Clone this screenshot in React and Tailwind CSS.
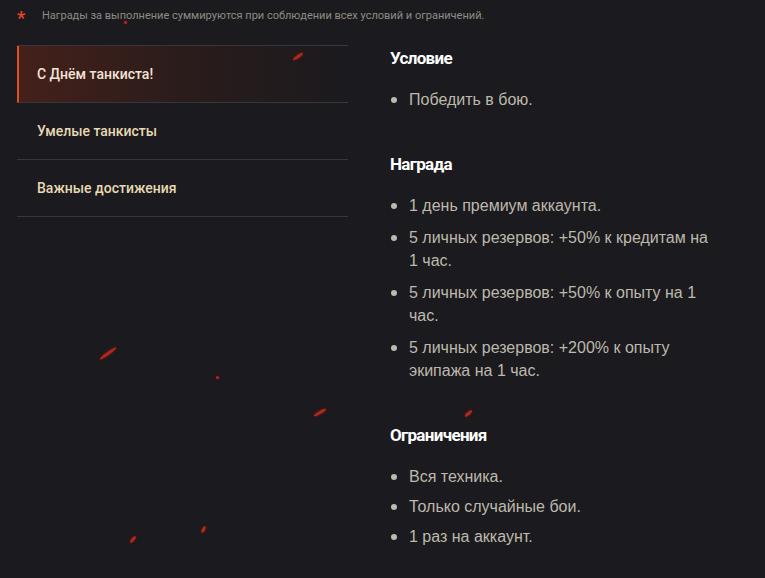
import React from 'react';

const menu = ['С Днём танкиста!', 'Умелые танкисты', 'Важные достижения'];

const sections = [
  { title: 'Условие', items: ['Победить в бою.'], gap: 'mb-[9px]' },
  {
    title: 'Награда',
    items: [
      '1 день премиум аккаунта.',
      '5 личных резервов: +50% к кредитам на 1 час.',
      '5 личных резервов: +50% к опыту на 1 час.',
      '5 личных резервов: +200% к опыту экипажа на 1 час.',
    ],
    gap: 'mb-[9px]',
  },
  { title: 'Ограничения', items: ['Вся техника.', 'Только случайные бои.', '1 раз на аккаунт.'], gap: 'mb-[7px]' },
];

// decorative embers floating over the background
const sparks = [
  { left: 292, top: 55, w: 12, rot: -35 },
  { left: 124, top: 21, w: 3, rot: -50 },
  { left: 98, top: 352, w: 20, rot: -35 },
  { left: 216, top: 376, w: 3, rot: 0 },
  { left: 313, top: 411, w: 14, rot: -30 },
  { left: 464, top: 412, w: 9, rot: -40 },
  { left: 129, top: 538, w: 8, rot: -50 },
  { left: 200, top: 528, w: 7, rot: -65 },
];

const App = () => {
  return (
    <div className="relative h-[578px] w-[765px] overflow-hidden bg-[#1b1a1e]" style={{ fontFamily: 'Roboto, sans-serif' }}>
      {sparks.map((s, i) => (
        <div
          key={i}
          className="absolute h-[3px] rounded-[50%] bg-[#c42a1d] opacity-90 shadow-[0_0_3px_#8a1a12]"
          style={{ left: s.left, top: s.top, width: s.w, transform: `rotate(${s.rot}deg)` }}
        />
      ))}

      <div className="flex items-center pl-[17px] pt-[7px]">
        <span className="relative top-[2px] w-[25px] text-[18px] font-bold leading-[18px] text-[#e5461f]">*</span>
        <p className="text-[11px] text-[#8f8c85]">
          Награды за выполнение суммируются при соблюдении всех условий и ограничений.
        </p>
      </div>

      <div className="mt-[20px] flex">
        <div className="ml-[17px] w-[331px] self-start border-t border-[#37363a]">
          {menu.map((name, i) => (
            <div
              key={name}
              className={`flex h-[57px] items-center border-b border-[#37363a] text-[14px] font-medium ${
                i === 0
                  ? 'border-l-2 border-l-[#d9521f] bg-gradient-to-r from-[#45201a] via-[#2a1c1b] to-[#1b1a1e] pl-[18px] text-[#f2e4d6]'
                  : 'pl-[20px] text-[#e6d9b4]'
              }`}
            >
              {name}
            </div>
          ))}
        </div>

        <div className="ml-[42px] w-[340px] pt-px">
          {sections.map((sec) => (
            <div key={sec.title} className="mb-[41px]">
              <h3 className="text-[17px] font-bold leading-[24px] tracking-[-0.04em] text-white">{sec.title}</h3>
              <ul className="mt-[18px]">
                {sec.items.map((item) => (
                  <li
                    key={item}
                    className={`${sec.gap} flex text-[16px] leading-[23px] text-[#bdb9ac]`}
                    style={{ fontFamily: '"Liberation Sans", Arial, sans-serif' }}
                  >
                    <span className="mr-[12px] ml-[1px] mt-[9px] h-[6px] w-[6px] shrink-0 rounded-full bg-[#bdb9ac]" />
                    <span className="w-[305px]">{item}</span>
                  </li>
                ))}
              </ul>
            </div>
          ))}
        </div>
      </div>
    </div>
  );
};

export default App;
